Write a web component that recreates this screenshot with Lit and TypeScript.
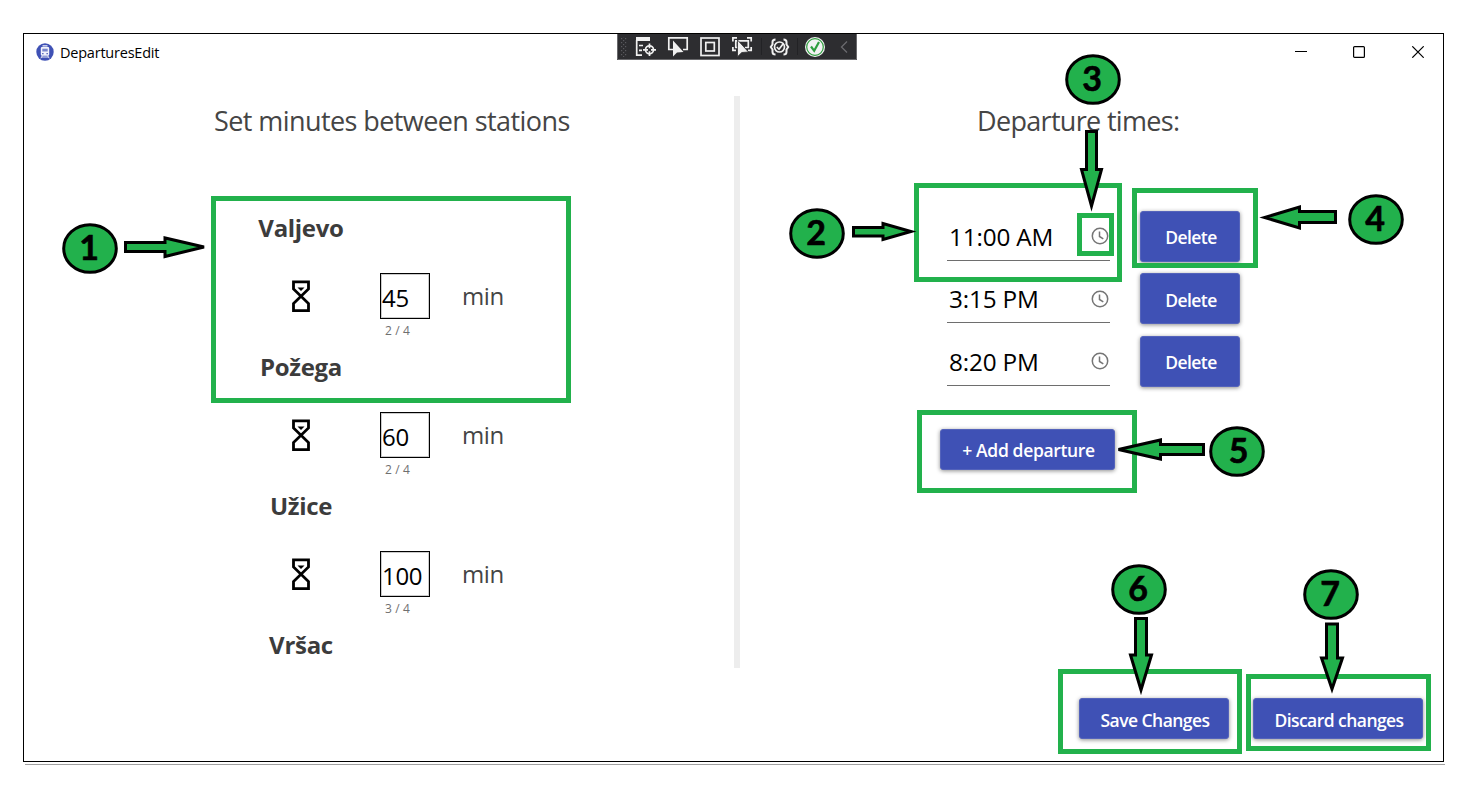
import { LitElement, html, svg, css } from "lit";
import { customElement, property } from "lit/decorators.js";

const base = css`
  :host { display: block; box-sizing: border-box; font-family: "Open Sans", "Noto Sans", sans-serif; }
  *, *::before, *::after { box-sizing: border-box; }
`;

@customElement("debug-toolbar")
class DebugToolbar extends LitElement {
  static styles = [base, css`
    :host { width: 240px; height: 26px; }
    svg { display: block; }
  `];
  render() {
    return html`<svg width="240" height="26" viewBox="0 0 240 26">
      <defs><pattern id="grip" width="4" height="4" patternUnits="userSpaceOnUse">
        <rect width="1.2" height="1.2" fill="#5a5a5e"></rect><rect x="2" y="2" width="1.2" height="1.2" fill="#5a5a5e"></rect>
      </pattern></defs>
      <rect width="240" height="26" fill="#2d2d30"></rect>
      <path d="M0.5 0V25.5H239.5V0" fill="none" stroke="#68686b"></path>
      <rect x="4" y="3" width="6" height="20" fill="url(#grip)"></rect>
      <g fill="none" stroke="#f0f0f0" stroke-width="1.700">
        <path d="M19 3H33V7H19Z" fill="#f0f0f0" stroke="none"></path>
        <path d="M19.700 6V21.200H25M22 11.500H26M22 16.300H25"></path>
        <circle cx="32.500" cy="15.800" r="4"></circle>
        <path d="M32.500 9.500V14.300M32.500 17.300V22M26 15.800H31M34 15.800H39"></path>
        <path d="M57 15.500H51.800V3.900H70.200V15.500H66"></path>
        <path d="M56 6.500V22.500L60 18.500L66.500 18Z" fill="#f0f0f0" stroke="none"></path>
        <rect x="84" y="4" width="18" height="17.500"></rect>
        <rect x="88.800" y="8.500" width="8.500" height="8.500"></rect>
        <path d="M115.900 7.500V3.900H120M130 3.900H134.200V7.500M134.200 13V16.300H131M119 16.300H115.900V13"></path>
        <path d="M121 13.500H118.800V6.800H131.300V13.500H128"></path>
        <path d="M120.500 6V22.700L124.800 18.500L131.500 18Z" fill="#f0f0f0" stroke="#2d2d30" stroke-width="0.800"></path>
        <circle cx="162.500" cy="13" r="5"></circle>
        <path d="M159.800 13L162 15.300L166 10"></path>
        <path stroke-width="2" d="M158.500 5.500Q155.500 5.500 155.500 8V10.500L153.800 13L155.500 15.500V18Q155.500 20.500 158.500 20.500M166.500 5.500Q169.500 5.500 169.500 8V10.500L171.200 13L169.500 15.500V18Q169.500 20.500 166.500 20.500"></path>
      </g>
      <path d="M144.500 4V21M180.500 4V21" stroke="#222225"></path>
      <circle cx="198" cy="13" r="10" fill="#f3f3f3"></circle>
      <circle cx="198" cy="13" r="8.300" fill="none" stroke="#2f9e3f" stroke-width="1.200"></circle>
      <path d="M194 12.500L197.200 16.800L202 8" fill="none" stroke="#2f9e3f" stroke-width="2.200"></path>
      <path d="M230 7.500L224.500 13L230 18.500" fill="none" stroke="#6a6a6e" stroke-width="1.300"></path>
    </svg>`;
  }
}

@customElement("title-bar")
class TitleBar extends LitElement {
  static styles = [base, css`
    :host { display: grid; grid-template-columns: 593px 240px 1fr; height: 62px; }
    .name { display: flex; gap: 6px; padding: 7px 0 0 12px; height: 29px; align-items: center; font-size: 14.500px; color: #000; letter-spacing: -0.220px; }
    .controls { display: flex; justify-content: flex-end; gap: 46px; padding: 12px 19px 0 0; }
    svg { display: block; flex: none; }
  `];
  render() {
    return html`
      <div class="name">
        <svg width="18" height="18" viewBox="0 0 18 18">
          <circle cx="9" cy="9" r="8.700" fill="#3f51b5"></circle>
          <path d="M6.500 2.200H11.500V3.400H6.500ZM4.800 5.200Q4.800 4 6 4H12Q13.200 4 13.200 5.200V11.500Q13.200 12.700 12 12.700H6Q4.800 12.700 4.800 11.500Z" fill="#f2f3fb"></path>
          <path d="M6.300 5.700H11.700V8.500H6.300Z" fill="#7986cb"></path>
          <path d="M6.200 10H7.500V11.200H6.200ZM10.500 10H11.800V11.200H10.500Z" fill="#3f51b5"></path>
          <path d="M6.500 12.500L4.800 15.300M11.500 12.500L13.200 15.300M5.800 14H12.200" stroke="#e8eaf6"></path>
        </svg>
        <span>DeparturesEdit</span>
      </div>
      <debug-toolbar></debug-toolbar>
      <div class="controls">
        <svg width="12" height="12" viewBox="0 0 12 12"><path d="M0 5.500H12" stroke="#000"></path></svg>
        <svg width="12" height="12" viewBox="0 0 12 12"><rect x="0.600" y="0.600" width="10.800" height="10.800" rx="1" fill="none" stroke="#000" stroke-width="1.200"></rect></svg>
        <svg width="13" height="12" viewBox="0 0 13 12"><path d="M1.300 0.300L12.700 11.700M12.700 0.300L1.300 11.700" stroke="#000" stroke-width="1.200"></path></svg>
      </div>`;
  }
}

@customElement("leg-row")
class LegRow extends LitElement {
  @property() minutes = "";
  @property() count = "";
  static styles = [base, css`
    :host { display: grid; grid-template-columns: 89px 50px 1fr; align-items: start; padding-left: 267px; height: 75px; }
    .glass { display: block; margin-top: 7px; }
    .box { height: 46px; border: 1px solid #000; box-shadow: inset 0 0 0 1px #ccc; padding: 7px 0 0 1px; font-size: 24px; line-height: 34px; color: #000; letter-spacing: -0.300px; }
    .count { padding-left: 5px; font-size: 12px; line-height: 16px; margin-top: 4px; color: #6f6f6f; letter-spacing: 0.150px; white-space: nowrap; }
    .unit { padding-left: 32px; font-size: 24px; line-height: 34px; margin-top: 6px; color: #454545; letter-spacing: -0.400px; }
  `];
  render() {
    return html`
      <svg class="glass" width="20" height="33" viewBox="0 0 20 33">
        <path d="M2.500 1.800H17.500V9L2.500 23.500V30.700H17.500V23.500L2.500 9Z" fill="none" stroke="#000" stroke-width="2.800"></path>
        <path d="M6.500 7.500H13.500L10 11Z" fill="#000"></path>
      </svg>
      <div><div class="box">${this.minutes}</div><div class="count">${this.count}</div></div>
      <span class="unit">min</span>`;
  }
}

@customElement("push-button")
class PushButton extends LitElement {
  static styles = [base, css`
    :host { display: flex; align-items: center; justify-content: center; background: #3f51b5; color: #fff; border: 1px solid #5463bb; border-radius: 3px; box-shadow: 0 1px 4px rgba(0,0,0,.45); font-size: 17.500px; font-weight: 600; letter-spacing: -0.550px; line-height: 24px; white-space: nowrap; padding: 2px 0 0 2px; }
  `];
  render() { return html`<slot></slot>`; }
}

@customElement("time-row")
class TimeRow extends LitElement {
  @property() time = "";
  static styles = [base, css`
    :host { display: grid; grid-template-columns: 163px 100px; gap: 30px; height: 50px; align-items: start; }
    .field { display: flex; height: 50px; justify-content: space-between; border-bottom: 1px solid #6e6e6e; padding: 9px 1px 0 2px; font-size: 24.300px; line-height: 34px; color: #000; letter-spacing: -0.150px; }
    svg { margin-top: 7.500px; display: block; }
    .del { height: 51px; }
  `];
  render() {
    return html`
      <div class="field"><span>${this.time}</span>
        <svg width="18" height="18" viewBox="0 0 18 18" fill="none" stroke="#757575" stroke-width="1.500"><circle cx="9" cy="9" r="7.700"></circle><path d="M8.500 4.500V9.500L12.300 11.800"></path></svg>
      </div>
      <push-button class="del">Delete</push-button>`;
  }
}

const BADGES: [number, number, string][] = [
  [90, 248.5, "1"], [817, 233.5, "2"], [1093, 79.5, "3"], [1376, 219.5, "4"], [1237, 451.5, "5"], [1139, 589.5, "6"], [1331, 594.5, "7"],
];
const FRAMES: [number, number, number, number][] = [
  [211, 196, 571, 403], [914, 183, 1122, 282], [1077, 213, 1114, 256], [1132, 188, 1258, 268], [917, 410, 1137, 493], [1058, 669, 1242, 754], [1246, 674, 1431, 751],
];
const ARROWS = [
  "M125.500 242.500H165V238L204 247L165 256.500V251.500H125.500Z",
  "M853.500 227.500H883V223.500L911 231.500L883 239.500V236H853.500Z",
  "M1086.500 131.500H1096.500V169.500H1101.500L1091.500 206L1081.500 169.500H1086.500Z",
  "M1335.500 211.500H1299.500V207L1264.500 217.500L1299.500 228V222.500H1335.500Z",
  "M1203.500 444.500H1160.500V440L1118.500 449.500L1160.500 459V454.500H1203.500Z",
  "M1135.500 618.500H1146.500V655H1151.500L1141 690L1130.500 655H1135.500Z",
  "M1326.500 624H1337.500V658H1342.500L1332 689L1321.500 658H1326.500Z",
];

@customElement("callout-layer")
class CalloutLayer extends LitElement {
  static styles = [base, css`
    svg { display: block; }
    text { font-family: Lato, "Open Sans", sans-serif; font-weight: 700; font-size: 34px; text-anchor: middle; stroke: #000; stroke-width: 0.600px; }
  `];
  render() {
    return html`<svg width="1464" height="794" viewBox="0 0 1464 794">
      ${FRAMES.map(([l, t, r, b]) => svg`<rect x=${l + 2.5} y=${t + 2.5} width=${r - l - 5} height=${b - t - 5} fill="none" stroke="#22b14c" stroke-width="5"></rect>`)}
      ${ARROWS.map((d) => svg`<path d=${d} fill="#22b14c" stroke="#000" stroke-width="3"></path>`)}
      ${BADGES.map(([x, y, n]) => svg`<ellipse cx=${x} cy=${y} rx="26.300" ry="23.800" fill="#22b14c" stroke="#000" stroke-width="3"></ellipse><text x=${n === "5" ? x + 1.5 : x - 1} y=${y + 11.5}>${n}</text>`)}
    </svg>`;
  }
}

@customElement("app-root")
class AppRoot extends LitElement {
  static styles = [base, css`
    :host { position: relative; width: 1464px; height: 794px; padding: 33px 20px 0 23px; background: #fff; overflow: hidden; }
    .window { height: 729px; border: 1px solid #000; display: flex; flex-direction: column; }
    .shade { height: 3px; border-bottom: 1px solid #a0a0a0; margin: 0 -1px 0 2px; }
    .body { flex: 1; display: grid; grid-template-columns: 710px 6px 1fr; }
    .bar { background: #ededed; height: 572px; }
    h1 { margin: 0; font-size: 27px; font-weight: 400; line-height: 38px; color: #454545; letter-spacing: -0.580px; white-space: nowrap; }
    .left h1 { padding: 6px 0 0 190px; }
    .station { width: 554px; height: 34px; text-align: center; font-size: 24px; line-height: 34px; font-weight: 700; color: #3c3c3c; letter-spacing: -0.300px; }
    .legs { padding-top: 71px; display: grid; grid-template-rows: 34px 105px 34px 105px 34px 105px 34px; }
    leg-row { margin-top: 28px; }
    .right { display: flex; flex-direction: column; }
    .right h1 { padding: 6px 0 0 237px; letter-spacing: -0.680px; }
    .times { padding: 70.600px 0 0 207px; display: grid; gap: 12.500px; }
    .add { width: 175px; height: 41px; margin: 43.400px 0 0 200px; letter-spacing: -0.350px; }
    .actions { margin-top: auto; display: flex; gap: 24px; justify-content: flex-end; padding: 0 20px 22px 0; }
    .save { width: 150px; height: 41px; }
    .discard { width: 170px; height: 41px; }
    .callouts { position: absolute; left: 0; top: 0; }
  `];
  render() {
    return html`
      <div class="window">
        <title-bar></title-bar>
        <div class="body">
          <section class="left">
            <h1>Set minutes between stations</h1>
            <div class="legs">
              <div class="station">Valjevo</div>
              <leg-row minutes="45" count="2 / 4"></leg-row>
              <div class="station">Požega</div>
              <leg-row minutes="60" count="2 / 4"></leg-row>
              <div class="station">Užice</div>
              <leg-row minutes="100" count="3 / 4"></leg-row>
              <div class="station">Vršac</div>
            </div>
          </section>
          <div class="bar"></div>
          <section class="right">
            <h1>Departure times:</h1>
            <div class="times">
              <time-row time="11:00 AM"></time-row>
              <time-row time="3:15 PM"></time-row>
              <time-row time="8:20 PM"></time-row>
            </div>
            <push-button class="add">+ Add departure</push-button>
            <div class="actions">
              <push-button class="save">Save Changes</push-button>
              <push-button class="discard">Discard changes</push-button>
            </div>
          </section>
        </div>
      </div>
      <div class="shade"></div>
      <callout-layer class="callouts"></callout-layer>`;
  }
}
